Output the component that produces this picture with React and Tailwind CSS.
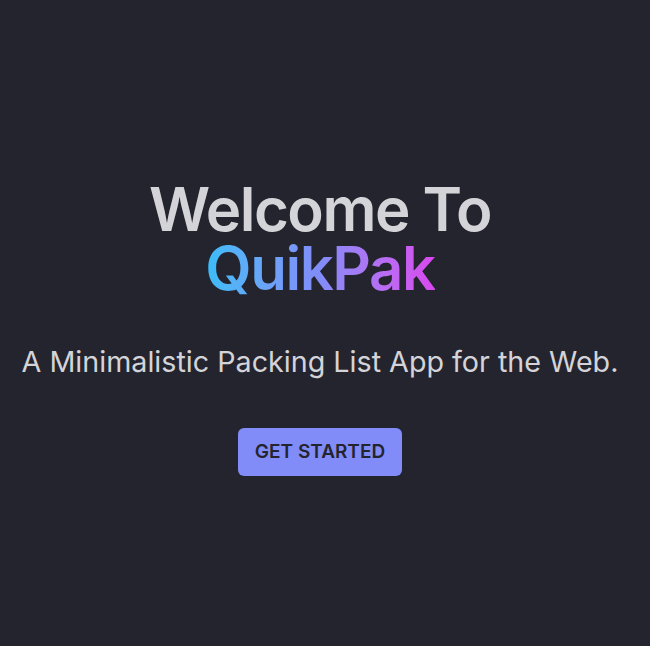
export default function App() {
  return (
    <div
      className="min-h-screen bg-[#24242f] flex flex-col items-center justify-center pt-[10px] pr-[10px] text-center text-[#d4d4d8]"
      style={{ fontFamily: 'Inter, "Open Sans", sans-serif' }}
    >
      <h1 className="text-6xl font-semibold leading-[59px] tracking-tight">
        Welcome To
        <br />
        <span className="bg-gradient-to-r from-[#38bdf8] via-[#818cf8] to-[#d946ef] bg-clip-text text-transparent">
          QuikPak
        </span>
      </h1>
      <p className="mt-[42px] text-[28.7px]">A Minimalistic Packing List App for the Web.</p>
      <button className="mt-[45px] h-12 px-[17px] rounded-md bg-[#818cf8] text-[#24242f] text-[19px] font-semibold">
        GET STARTED
      </button>
    </div>
  );
}
